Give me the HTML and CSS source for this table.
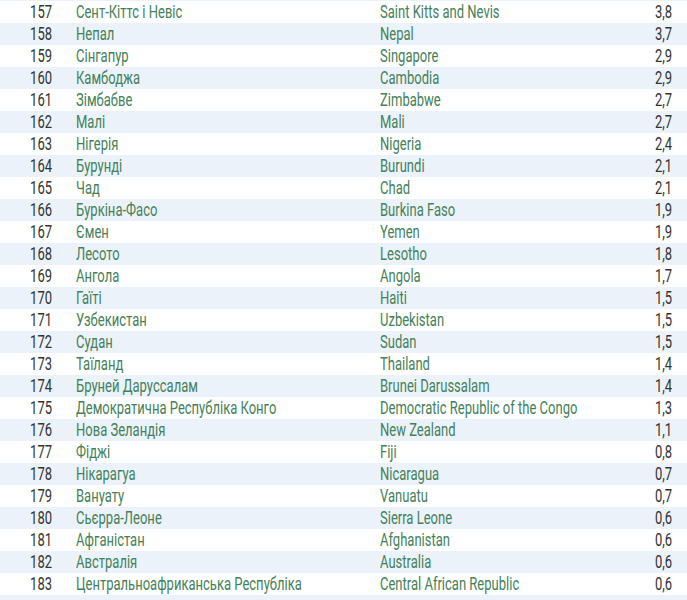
FILE: index.html
```html
<!DOCTYPE html>
<html lang="uk">
<head>
<meta charset="utf-8">
<link rel="stylesheet" href="styles.css">
</head>
<body>
<div class="table">
  <div class="row"><div class="num"><span>157</span></div><div class="ua"><span>Сент-Кіттс і Невіс</span></div><div class="en"><span>Saint Kitts and Nevis</span></div><div class="val"><span>3,8</span></div></div>
  <div class="row"><div class="num"><span>158</span></div><div class="ua"><span>Непал</span></div><div class="en"><span>Nepal</span></div><div class="val"><span>3,7</span></div></div>
  <div class="row"><div class="num"><span>159</span></div><div class="ua"><span>Сінгапур</span></div><div class="en"><span>Singapore</span></div><div class="val"><span>2,9</span></div></div>
  <div class="row"><div class="num"><span>160</span></div><div class="ua"><span>Камбоджа</span></div><div class="en"><span>Cambodia</span></div><div class="val"><span>2,9</span></div></div>
  <div class="row"><div class="num"><span>161</span></div><div class="ua"><span>Зімбабве</span></div><div class="en"><span>Zimbabwe</span></div><div class="val"><span>2,7</span></div></div>
  <div class="row"><div class="num"><span>162</span></div><div class="ua"><span>Малі</span></div><div class="en"><span>Mali</span></div><div class="val"><span>2,7</span></div></div>
  <div class="row"><div class="num"><span>163</span></div><div class="ua"><span>Нігерія</span></div><div class="en"><span>Nigeria</span></div><div class="val"><span>2,4</span></div></div>
  <div class="row"><div class="num"><span>164</span></div><div class="ua"><span>Бурунді</span></div><div class="en"><span>Burundi</span></div><div class="val"><span>2,1</span></div></div>
  <div class="row"><div class="num"><span>165</span></div><div class="ua"><span>Чад</span></div><div class="en"><span>Chad</span></div><div class="val"><span>2,1</span></div></div>
  <div class="row"><div class="num"><span>166</span></div><div class="ua"><span>Буркіна-Фасо</span></div><div class="en"><span>Burkina Faso</span></div><div class="val"><span>1,9</span></div></div>
  <div class="row"><div class="num"><span>167</span></div><div class="ua"><span>Ємен</span></div><div class="en"><span>Yemen</span></div><div class="val"><span>1,9</span></div></div>
  <div class="row"><div class="num"><span>168</span></div><div class="ua"><span>Лесото</span></div><div class="en"><span>Lesotho</span></div><div class="val"><span>1,8</span></div></div>
  <div class="row"><div class="num"><span>169</span></div><div class="ua"><span>Ангола</span></div><div class="en"><span>Angola</span></div><div class="val"><span>1,7</span></div></div>
  <div class="row"><div class="num"><span>170</span></div><div class="ua"><span>Гаїті</span></div><div class="en"><span>Haiti</span></div><div class="val"><span>1,5</span></div></div>
  <div class="row"><div class="num"><span>171</span></div><div class="ua"><span>Узбекистан</span></div><div class="en"><span>Uzbekistan</span></div><div class="val"><span>1,5</span></div></div>
  <div class="row"><div class="num"><span>172</span></div><div class="ua"><span>Судан</span></div><div class="en"><span>Sudan</span></div><div class="val"><span>1,5</span></div></div>
  <div class="row"><div class="num"><span>173</span></div><div class="ua"><span>Таїланд</span></div><div class="en"><span>Thailand</span></div><div class="val"><span>1,4</span></div></div>
  <div class="row"><div class="num"><span>174</span></div><div class="ua"><span>Бруней Даруссалам</span></div><div class="en"><span>Brunei Darussalam</span></div><div class="val"><span>1,4</span></div></div>
  <div class="row"><div class="num"><span>175</span></div><div class="ua"><span>Демократична Республіка Конго</span></div><div class="en"><span>Democratic Republic of the Congo</span></div><div class="val"><span>1,3</span></div></div>
  <div class="row"><div class="num"><span>176</span></div><div class="ua"><span>Нова Зеландія</span></div><div class="en"><span>New Zealand</span></div><div class="val"><span>1,1</span></div></div>
  <div class="row"><div class="num"><span>177</span></div><div class="ua"><span>Фіджі</span></div><div class="en"><span>Fiji</span></div><div class="val"><span>0,8</span></div></div>
  <div class="row"><div class="num"><span>178</span></div><div class="ua"><span>Нікарагуа</span></div><div class="en"><span>Nicaragua</span></div><div class="val"><span>0,7</span></div></div>
  <div class="row"><div class="num"><span>179</span></div><div class="ua"><span>Вануату</span></div><div class="en"><span>Vanuatu</span></div><div class="val"><span>0,7</span></div></div>
  <div class="row"><div class="num"><span>180</span></div><div class="ua"><span>Сьєрра-Леоне</span></div><div class="en"><span>Sierra Leone</span></div><div class="val"><span>0,6</span></div></div>
  <div class="row"><div class="num"><span>181</span></div><div class="ua"><span>Афганістан</span></div><div class="en"><span>Afghanistan</span></div><div class="val"><span>0,6</span></div></div>
  <div class="row"><div class="num"><span>182</span></div><div class="ua"><span>Австралія</span></div><div class="en"><span>Australia</span></div><div class="val"><span>0,6</span></div></div>
  <div class="row"><div class="num"><span>183</span></div><div class="ua"><span>Центральноафриканська Республіка</span></div><div class="en"><span>Central African Republic</span></div><div class="val"><span>0,6</span></div></div>
</div>
</body>
</html>
```

FILE: styles.css
```css
html, body {
  margin: 0;
  padding: 0;
  background: #ebf2fa;
}
body {
  font-family: Roboto, "Liberation Sans", sans-serif;
  font-weight: 400;
  font-size: 19px;
  width: 687px;
  height: 600px;
  overflow: hidden;
}
.table {
  padding-top: 1px;
  display: flex;
  flex-direction: column;
}
.row {
  display: flex;
  height: 22px;
  line-height: 22px;
  background: #ffffff;
  white-space: nowrap;
}
.row:nth-child(even) {
  background: #ebf2fa;
}
.row > div {
  min-width: 0;
  overflow: visible;
}
.row span {
  display: inline-block;
  transform: scaleX(0.685);
  transform-origin: left center;
}
.num {
  flex: 0 0 52px;
  text-align: right;
  color: #333333;
}
.num span, .val span {
  transform-origin: right center;
}
.ua {
  flex: 0 0 304px;
  padding-left: 24px;
  color: #44815a;
}
.en {
  flex: 1 1 0;
  color: #44815a;
}
.val {
  flex: 0 0 auto;
  padding-right: 15px;
  text-align: right;
  color: #333333;
}
```
